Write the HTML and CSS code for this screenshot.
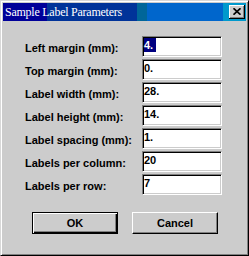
FILE: index.html
```html
<!DOCTYPE html>
<html lang="en">
<head>
    <title>Sample Label Parameters</title>
    <meta charset="utf-8">
    <link rel="stylesheet" href="styles.css">
</head>
<body>
    <div class="window">
        <div class="titlebar">
            <span class="title">Sample Label Parameters</span>
            <span class="close">
                <svg width="8" height="7" viewBox="0 0 8 7">
                    <path d="M0.5 0.3 L7.5 6.7 M7.5 0.3 L0.5 6.7" stroke="#000" stroke-width="1.7" fill="none"/>
                </svg>
            </span>
        </div>

        <div class="content">
            <div class="params">
                <label>Left margin (mm):</label>
                <div class="field"><span class="selected">4.</span></div>

                <label>Top margin (mm):</label>
                <div class="field">0.</div>

                <label>Label width (mm):</label>
                <div class="field">28.</div>

                <label>Label height (mm):</label>
                <div class="field">14.</div>

                <label>Label spacing (mm):</label>
                <div class="field">1.</div>

                <label>Labels per column:</label>
                <div class="field">20</div>

                <label>Labels per row:</label>
                <div class="field">7</div>
            </div>

            <div class="buttons">
                <button class="btn default">OK</button>
                <button class="btn">Cancel</button>
            </div>
        </div>
    </div>
</body>
</html>
```

FILE: styles.css
```css
html, body {
    margin: 0;
    padding: 0;
    background-color: #cccccc;
}
body {
    width: 249px;
    height: 256px;
    font-family: "Liberation Sans", Arial, sans-serif;
    font-size: 11px;
    font-weight: bold;
    color: #000;
}
.window {
    box-sizing: border-box;
    width: 249px;
    height: 256px;
    background-color: #cccccc;
    border: 1px solid;
    border-color: #d8d8d8 #000 #000 #d8d8d8;
    box-shadow: inset 1px 1px #fff, inset -1px -1px #808080;
    padding: 2px;
}
.titlebar {
    height: 18px;
    display: flex;
    align-items: center;
    background: linear-gradient(to right,
        #000099 0 44px,
        #003399 44px 134px,
        #006699 134px 144px,
        #0066cc 144px 220px,
        #0099cc 220px);
}
.title {
    font-family: "Liberation Serif", "Times New Roman", serif;
    font-weight: normal;
    font-size: 12px;
    letter-spacing: -0.25px;
    color: #fff;
    padding-left: 2px;
    padding-top: 1px;
}
.close {
    margin-left: auto;
    margin-right: 1px;
    width: 16px;
    height: 14px;
    box-sizing: border-box;
    background-color: #cccccc;
    box-shadow: inset -1px -1px #000, inset 1px 1px #fff, inset -2px -2px #808080;
    display: flex;
    align-items: center;
    justify-content: center;
    padding-bottom: 1px;
}
.close svg {
    display: block;
}
.content {
    padding: 15px 0 0 22px;
}
.params {
    display: grid;
    grid-template-columns: 117px 80px;
    row-gap: 2px;
}
.params label {
    height: 21px;
    display: flex;
    align-items: center;
    padding-top: 2px;
    box-sizing: border-box;
    white-space: nowrap;
}
.field {
    box-sizing: border-box;
    height: 21px;
    background-color: #fff;
    border: 1px solid;
    border-color: #808080 #fff #fff #808080;
    box-shadow: inset 1px 1px #000, inset -1px -1px #cccccc;
    padding: 1px 0 0 1px;
    line-height: 14px;
}
.selected {
    display: inline-block;
    background-color: #000080;
    color: #fff;
    padding-right: 3px;
}
.buttons {
    display: flex;
    gap: 14px;
    margin-top: 17px;
    padding-left: 7px;
}
.btn {
    box-sizing: border-box;
    width: 86px;
    height: 22px;
    margin: 0;
    font-family: "Liberation Sans", Arial, sans-serif;
    font-size: 11px;
    font-weight: bold;
    color: #000;
    background-color: #cccccc;
    border: 1px solid;
    border-color: #fff #000 #000 #fff;
    box-shadow: inset -1px -1px #808080;
    padding: 0;
}
.btn.default {
    border: 1px solid #000;
    box-shadow: inset 1px 1px #fff, inset -1px -1px #000, inset -2px -2px #808080;
}
```
